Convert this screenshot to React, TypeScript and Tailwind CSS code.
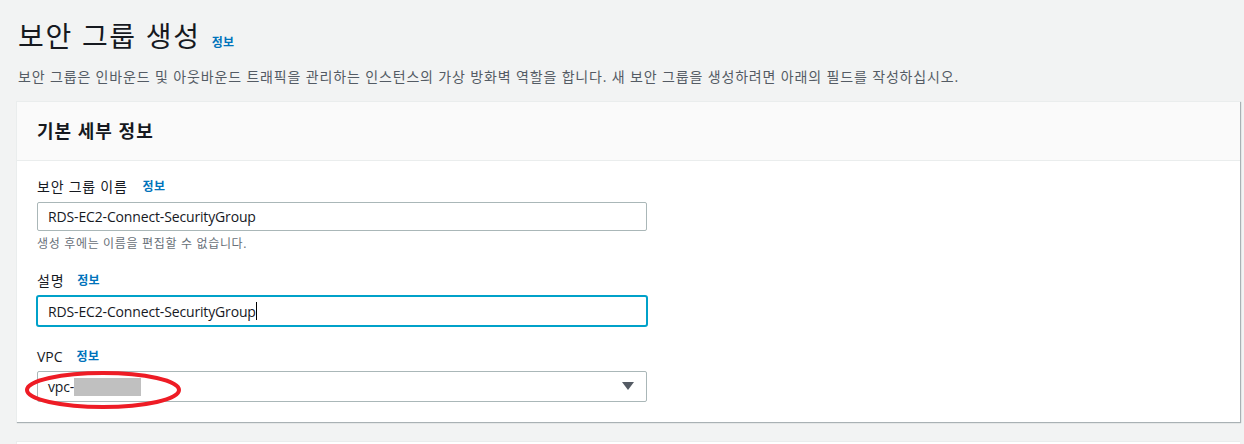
import React from "react";

function Info({ className = "" }: { className?: string }) {
  return (
    <span className={`text-[12px] font-bold text-[#0073bb] tracking-[0.3px] ${className}`}>정보</span>
  );
}

export default function App() {
  return (
    <div className="w-[1244px] h-[444px] overflow-hidden bg-[#f2f3f3] text-[#16191f] [font-family:'Open_Sans','Noto_Sans_CJK_KR',sans-serif]">
      <div className="pl-[18px] pt-[16px]">
        <div className="flex items-baseline gap-[11px]">
          <h1 className="text-[28px] leading-[40px] font-normal tracking-[1.7px] text-[#16191f]">보안 그룹 생성</h1>
          <Info />
        </div>
        <p className="mt-[11px] text-[14px] leading-[20px] tracking-[0.85px] text-[#545b64]">
          보안 그룹은 인바운드 및 아웃바운드 트래픽을 관리하는 인스턴스의 가상 방화벽 역할을 합니다. 새 보안 그룹을 생성하려면 아래의 필드를 작성하십시오.
        </p>
      </div>
      <div className="ml-[16px] mr-[4px] mt-[14px] bg-white border-t border-l border-[#eaeded] shadow-[1px_1px_1px_0_rgba(0,28,36,0.3)]">
        <div className="h-[59px] bg-[#fafafa] border-b border-[#eaeded] flex items-center pl-[20px]">
          <h2 className="text-[18px] font-bold leading-[24px] tracking-[1px]">기본 세부 정보</h2>
        </div>
        <div className="pl-[20px] pt-[15px] pb-[20px]">
          <div className="flex items-center gap-[15px] text-[14px] leading-[22px]">
            <span className="tracking-[0.75px]">보안 그룹 이름</span>
            <Info />
          </div>
          <div className="mt-[4px] w-[610px] h-[29px] border border-[#aab7b8] rounded-[2px] flex items-center pl-[10px] text-[14px] tracking-[-0.15px]">
            RDS-EC2-Connect-SecurityGroup
          </div>
          <div className="mt-[3px] text-[12px] leading-[20px] tracking-[0.67px] text-[#687078]">생성 후에는 이름을 편집할 수 없습니다.</div>
          <div className="mt-[16px] flex items-center gap-[13px] text-[14px] leading-[22px]">
            <span className="tracking-[0.75px]">설명</span>
            <Info />
          </div>
          <div className="mt-[3px] -ml-[1px] w-[612px] h-[32px] border-2 border-[#00a1c9] rounded-[3px] flex items-center pl-[10px] text-[14px] tracking-[-0.15px]">
            RDS-EC2-Connect-SecurityGroup
            <span className="inline-block w-[1px] h-[18px] bg-black"></span>
          </div>
          <div className="mt-[19px] flex items-center gap-[14px] text-[14px] leading-[22px]">
            <span>VPC</span>
            <Info />
          </div>
          <div className="relative mt-[3px] w-[610px] h-[31px] border border-[#aab7b8] rounded-[2px] flex items-center pl-[10px] text-[14px] tracking-[-0.15px]">
            <span>vpc-</span>
            <span className="inline-block w-[67px] h-[18px] bg-[#c0c0c0]"></span>
            <svg className="absolute right-[12px] top-[10px]" width="12" height="9" viewBox="0 0 12 9">
              <path d="M0 0 H12 L6 8 Z" fill="#545b64" />
            </svg>
            <svg className="absolute left-[-14px] top-[-3px]" width="160" height="44" viewBox="0 0 160 44">
              <ellipse cx="79" cy="21" rx="76" ry="17" fill="none" stroke="#ee1c25" strokeWidth="4" />
            </svg>
          </div>
        </div>
      </div>
      <div className="ml-[16px] mr-[4px] mt-[19px] h-[20px] bg-white border-t border-l border-[#eaeded]"></div>
    </div>
  );
}
